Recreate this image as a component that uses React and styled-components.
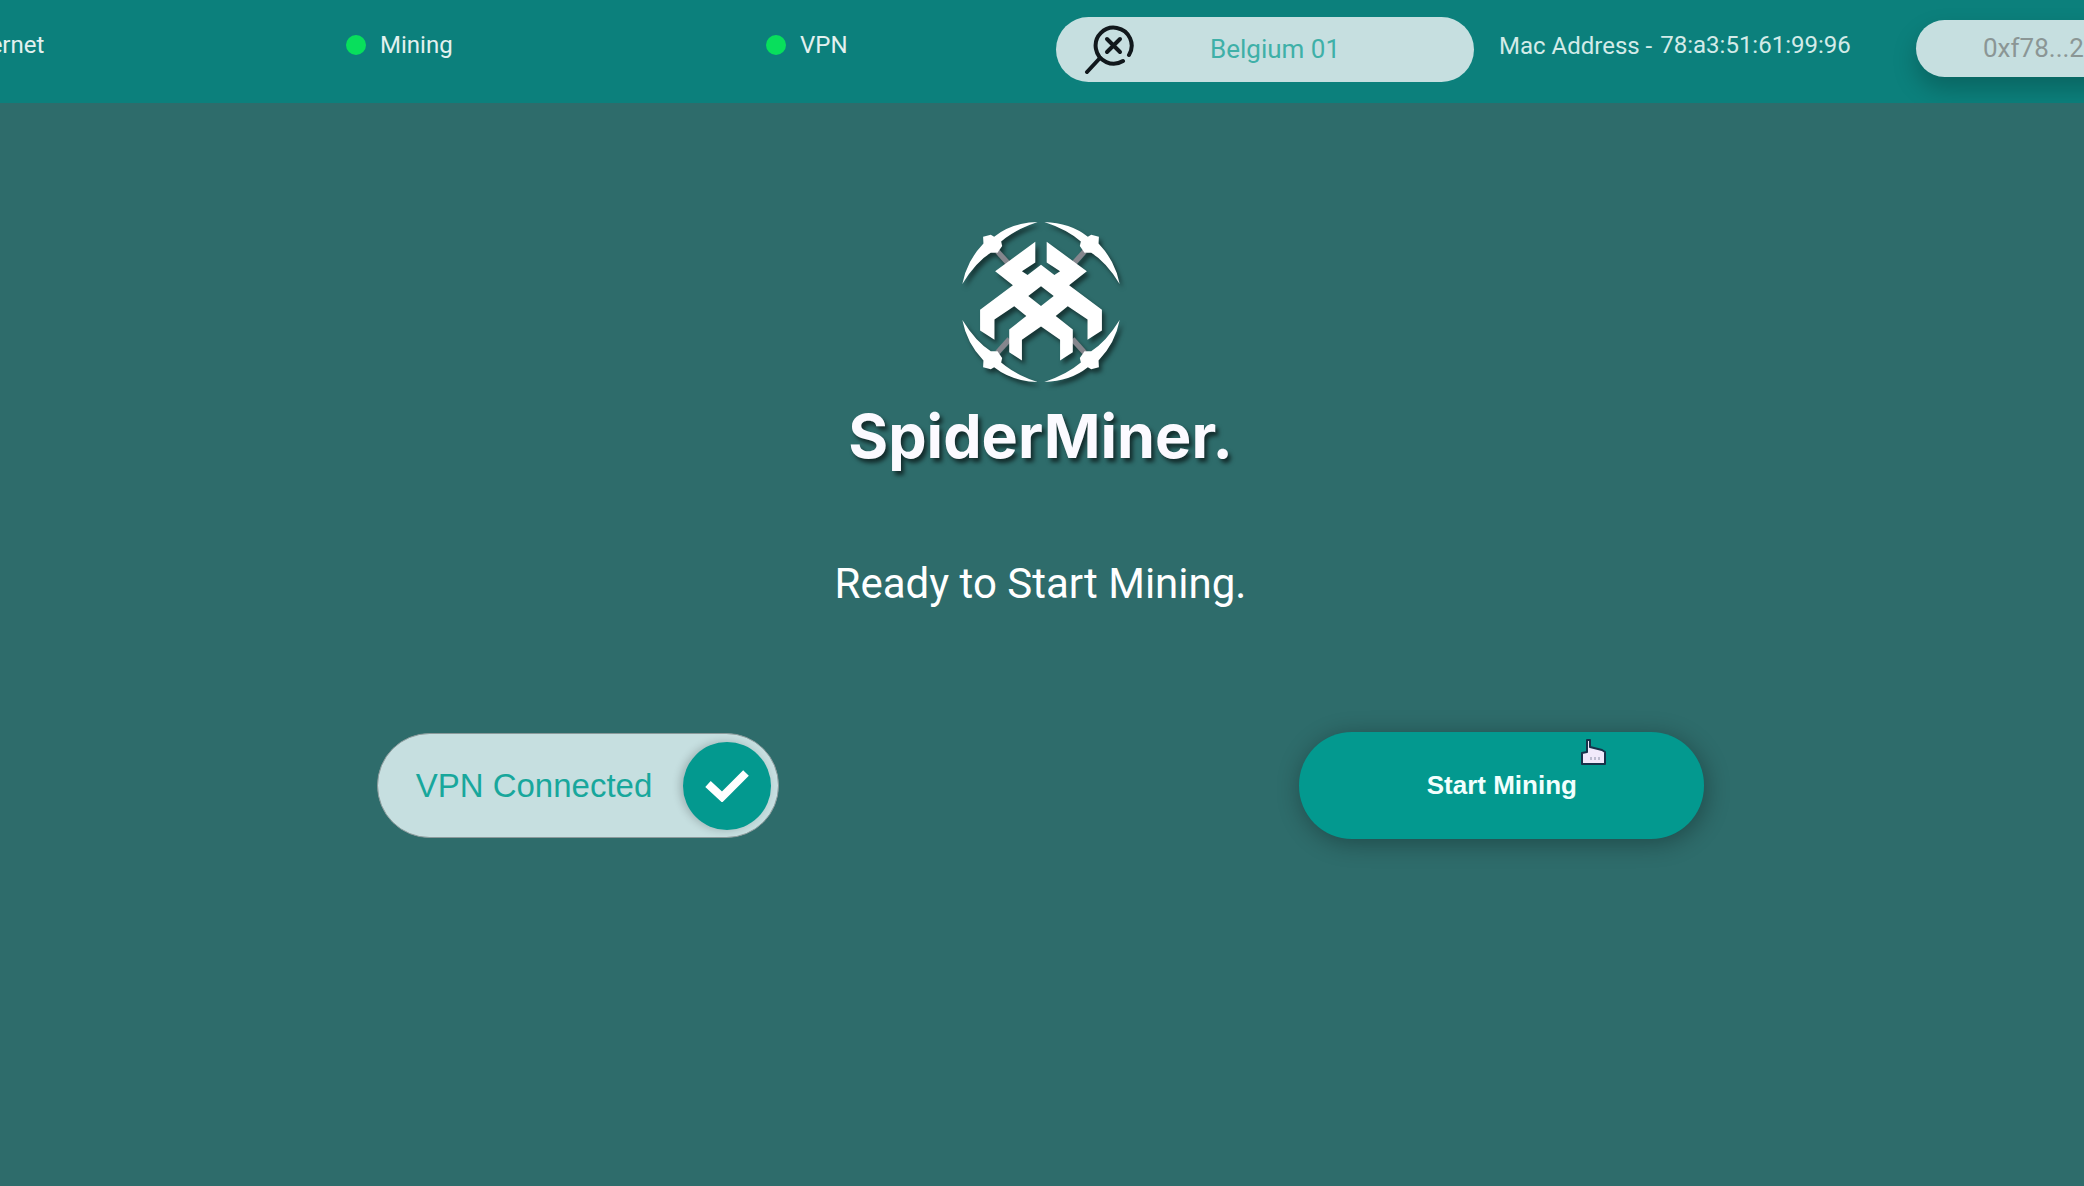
import React from 'react';
import styled, { createGlobalStyle } from 'styled-components';

const GlobalStyle = createGlobalStyle`
  * {
    box-sizing: border-box;
  }
  body {
    margin: 0;
    min-height: 100vh;
    background: #2e6c6b;
    color: #fff;
    font-family: Roboto, 'Liberation Sans', sans-serif;
  }
`;

const Header = styled.header`
  height: 103px;
  padding-top: 17px;
  background: #0c807c;
  overflow: hidden;
`;

const StatusBar = styled.div`
  display: grid;
  grid-template-columns: 418fr 420fr 290fr 443fr 417fr 168fr;
  align-items: start;
  margin-left: -72px;
`;

const Status = styled.div`
  display: flex;
  align-items: center;
  gap: 14px;
  color: #e3f1ef;
  font-size: 24px;
  line-height: 56px;
  white-space: nowrap;
`;

const Dot = styled.span`
  width: 20px;
  height: 20px;
  border-radius: 50%;
  background: #08df5c;
`;

const ServerPicker = styled.button`
  display: flex;
  align-items: center;
  height: 65px;
  margin-right: 25px;
  padding: 0 28px 2px;
  border: 0;
  border-radius: 33px;
  background: #c6dfe0;
  color: #3fb0a8;
  font-family: inherit;
  font-size: 26px;
  text-align: left;
`;

const ServerName = styled.span`
  margin-left: 76px;
  white-space: nowrap;
`;

const Mac = styled.div`
  display: flex;
  gap: 8px;
  color: #d3ebe8;
  font-size: 24px;
  line-height: 56px;
  white-space: nowrap;
`;

const MacLabel = styled.span`
  line-height: 58px;
`;

const Wallet = styled.button`
  height: 57px;
  margin: 3px -240px 0 0;
  padding: 0 67px 2px;
  border: 0;
  border-radius: 29px;
  background: #c6dfe0;
  box-shadow: 0 12px 24px rgba(0, 0, 0, 0.22);
  color: #8b9695;
  font-family: inherit;
  font-size: 26px;
  text-align: left;
  white-space: nowrap;
`;

const Main = styled.main`
  display: flex;
  flex-direction: column;
  align-items: center;
  padding: 117px 3px 40px 0;
`;

const Emblem = styled.svg`
  width: 164px;
  height: 164px;
  overflow: visible;
  filter: drop-shadow(3px 4px 2px rgba(0, 0, 0, 0.5));
`;

const Brand = styled.h1`
  margin: 16px 0 0;
  color: #fbfaff;
  font-family: Inter, sans-serif;
  font-size: 61px;
  font-weight: 700;
  line-height: 72px;
  text-shadow: 3px 4px 4px rgba(0, 0, 0, 0.6);
`;

const Message = styled.p`
  margin: 86px 0 0;
  font-size: 42px;
  line-height: 52px;
`;

const Actions = styled.div`
  display: flex;
  justify-content: space-between;
  align-items: center;
  width: 100%;
  margin-top: 122px;
  padding: 0 18.1%;
`;

const VpnButton = styled.button`
  display: flex;
  align-items: center;
  justify-content: space-between;
  width: 402px;
  height: 105px;
  padding: 0 7px 0 38px;
  border: 1px solid #8b9a9b;
  border-radius: 53px;
  background: #c6dfe0;
  color: #18a79c;
  font-family: 'Liberation Sans', Arial, sans-serif;
  font-size: 33px;
`;

const Knob = styled.span`
  display: flex;
  align-items: center;
  justify-content: center;
  width: 88px;
  height: 88px;
  border-radius: 50%;
  background: #03998f;
  box-shadow: -3px 0 8px rgba(0, 0, 0, 0.2);
`;

const StartButton = styled.button`
  position: relative;
  width: 405px;
  height: 107px;
  border: 0;
  border-radius: 53px;
  background: #03998f;
  box-shadow: 2px 4px 24px rgba(0, 0, 0, 0.32);
  color: #f2fffd;
  font-family: 'Liberation Sans', Arial, sans-serif;
  font-size: 26px;
  font-weight: 700;
`;

const Pointer = styled.svg`
  position: absolute;
  top: 6px;
  right: 97px;
  width: 28px;
  height: 28px;
`;

const Pickaxe = () => (
  <>
    <path d="M172 154l36 40" stroke="#85868d" strokeWidth="16" />
    <path
      fill="#fff"
      d="M67 251Q80 182 130 130L129 110L152 104L162 110Q215 68 292 66Q225 88 183 124L186 138L172 158L152 158Q108 185 67 251Z"
    />
  </>
);

const Logo = () => (
  <Emblem viewBox="57 60 490 490" aria-hidden="true">
    <Pickaxe />
    <g transform="matrix(-1 0 0 1 604 0)"><Pickaxe /></g>
    <g transform="matrix(1 0 0 -1 0 610)"><Pickaxe /></g>
    <g transform="matrix(-1 0 0 -1 604 610)"><Pickaxe /></g>
    <path
      fill="#fff"
      fillRule="evenodd"
      d="M285 125V187L245 213L262 224L302 194L342 224L359 213L319 187V125L439 213L386 255L484 328V390L441 418V357L382 318L346 347L397 387V455L359 480V418L302 378L245 418V480L207 455V387L258 347L222 318L163 357V418L120 390V328L218 255L165 213ZM302 258L264 287L302 317L340 287Z"
    />
  </Emblem>
);

const SearchIcon = () => (
  <svg width="50" height="50" viewBox="0 0 50 50" fill="none" stroke="#11181c" strokeWidth="4" strokeLinecap="round" aria-hidden="true">
    <path d="M39 37A18 18 0 1 1 45 31" />
    <path d="M16 34L3 48" />
    <path d="M23 15l13 13M36 15l-13 13" />
  </svg>
);

const App = () => {
  return (
    <>
      <GlobalStyle />
      <Header>
        <StatusBar>
          <Status><Dot />Internet</Status>
          <Status><Dot />Mining</Status>
          <Status><Dot />VPN</Status>
          <ServerPicker type="button">
            <SearchIcon />
            <ServerName>Belgium 01</ServerName>
          </ServerPicker>
          <Mac>
            <MacLabel>Mac Address -</MacLabel>
            <span>78:a3:51:61:99:96</span>
          </Mac>
          <Wallet type="button">0xf78...2</Wallet>
        </StatusBar>
      </Header>
      <Main>
        <Logo />
        <Brand>SpiderMiner.</Brand>
        <Message>Ready to Start Mining.</Message>
        <Actions>
          <VpnButton type="button">
            VPN Connected
            <Knob>
              <svg width="44" height="32" viewBox="0 0 44 32" fill="none" stroke="#fff" strokeWidth="8" aria-hidden="true">
                <path d="M3 14L17 27L41 3" />
              </svg>
            </Knob>
          </VpnButton>
          <StartButton type="button">
            Start Mining
            <Pointer viewBox="0 0 28 28" aria-hidden="true">
              <path
                fill="#f1e9fb"
                stroke="#17324a"
                strokeWidth="2"
                strokeLinejoin="round"
                d="M8 2h3v7l4 1l4 1l4 1l3 2v12H3V15l5-1z"
              />
              <path d="M12 19v3M16 19v3M20 19v3" stroke="#8a8fa6" strokeWidth="1" />
            </Pointer>
          </StartButton>
        </Actions>
      </Main>
    </>
  );
};

export default App;
